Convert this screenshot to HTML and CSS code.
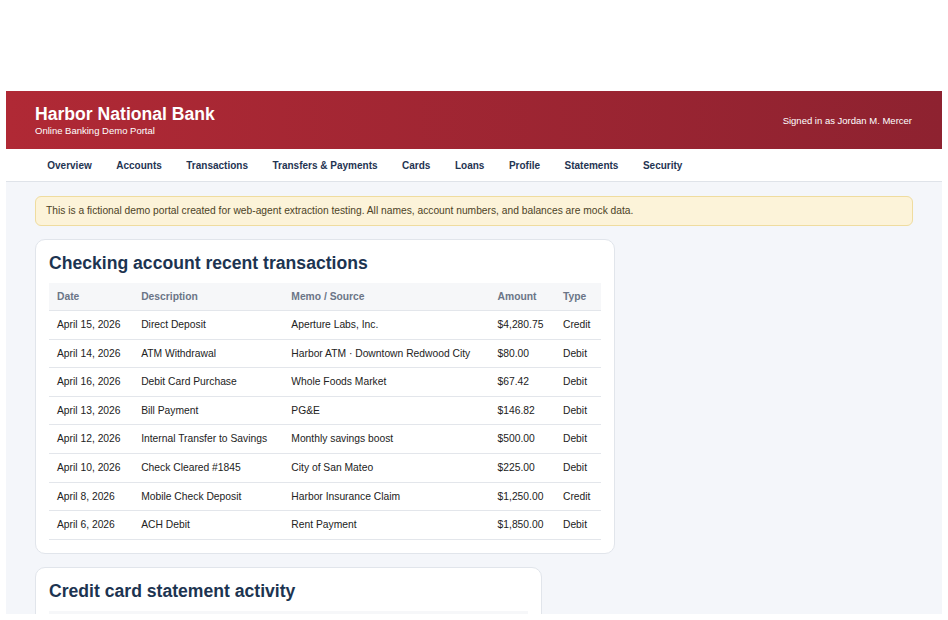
FILE: index.html
```html
<!DOCTYPE html>
<html lang="en">
<head>
    <meta charset="UTF-8">
    <title>Harbor National Bank</title>
    <link rel="stylesheet" href="styles.css">
</head>
<body>
    <div class="frame">
        <header class="topbar">
            <div class="brand">
                <h1>Harbor National Bank</h1>
                <p>Online Banking Demo Portal</p>
            </div>
            <div class="user">Signed in as Jordan M. Mercer</div>
        </header>
        <nav class="mainnav">
            <a href="#">Overview</a>
            <a href="#">Accounts</a>
            <a href="#">Transactions</a>
            <a href="#">Transfers &amp; Payments</a>
            <a href="#">Cards</a>
            <a href="#">Loans</a>
            <a href="#">Profile</a>
            <a href="#">Statements</a>
            <a href="#">Security</a>
        </nav>
        <main class="content">
            <div class="notice">This is a fictional demo portal created for web-agent extraction testing. All names, account numbers, and balances are mock data.</div>

            <section class="card">
                <h2>Checking account recent transactions</h2>
                <table class="tx">
                    <thead>
                        <tr><th>Date</th><th>Description</th><th>Memo / Source</th><th>Amount</th><th>Type</th></tr>
                    </thead>
                    <tbody>
                        <tr><td>April 15, 2026</td><td>Direct Deposit</td><td>Aperture Labs, Inc.</td><td>$4,280.75</td><td>Credit</td></tr>
                        <tr><td>April 14, 2026</td><td>ATM Withdrawal</td><td>Harbor ATM · Downtown Redwood City</td><td>$80.00</td><td>Debit</td></tr>
                        <tr><td>April 16, 2026</td><td>Debit Card Purchase</td><td>Whole Foods Market</td><td>$67.42</td><td>Debit</td></tr>
                        <tr><td>April 13, 2026</td><td>Bill Payment</td><td>PG&amp;E</td><td>$146.82</td><td>Debit</td></tr>
                        <tr><td>April 12, 2026</td><td>Internal Transfer to Savings</td><td>Monthly savings boost</td><td>$500.00</td><td>Debit</td></tr>
                        <tr><td>April 10, 2026</td><td>Check Cleared #1845</td><td>City of San Mateo</td><td>$225.00</td><td>Debit</td></tr>
                        <tr><td>April 8, 2026</td><td>Mobile Check Deposit</td><td>Harbor Insurance Claim</td><td>$1,250.00</td><td>Credit</td></tr>
                        <tr><td>April 6, 2026</td><td>ACH Debit</td><td>Rent Payment</td><td>$1,850.00</td><td>Debit</td></tr>
                    </tbody>
                </table>
            </section>

            <section class="card card2">
                <h2>Credit card statement activity</h2>
                <div class="tablehead"></div>
            </section>
        </main>
    </div>
</body>
</html>
```

FILE: styles.css
```css
body {
    margin: 0;
    background: #fff;
    font-family: "Liberation Sans", Arial, sans-serif;
}

.frame {
    margin: 91px 6px 0;
    height: 523px;
    overflow: hidden;
    background: #f4f6fa;
}

.topbar {
    display: flex;
    justify-content: space-between;
    align-items: center;
    height: 58px;
    padding: 0 30px 0 29px;
    background: linear-gradient(90deg, #b02935 0%, #8e2230 100%);
    color: #fff;
}
.brand h1 {
    margin: 0;
    font-size: 17.6px;
    line-height: 21px;
}
.brand p {
    margin: 0;
    font-size: 9.5px;
    line-height: 12px;
}
.user {
    font-size: 9.5px;
}

.mainnav {
    display: flex;
    height: 32px;
    align-items: center;
    padding: 0 29px;
    background: #fff;
    border-bottom: 1px solid #dfe3e9;
}
.mainnav a {
    padding: 0 12.25px;
    font-size: 10px;
    font-weight: bold;
    color: #1f3452;
    text-decoration: none;
}

.content {
    padding: 14px 29px;
}

.notice {
    padding: 0 10px;
    height: 28px;
    line-height: 28px;
    font-size: 10.25px;
    color: #4d4326;
    background: #fcf3d9;
    border: 1px solid #efdc9f;
    border-radius: 6px;
}

.card {
    width: 552px;
    margin-top: 13px;
    padding: 12px 13px 13px;
    background: #fff;
    border: 1px solid #e1e5eb;
    border-radius: 10px;
}
.card h2 {
    margin: 0 0 9px;
    font-size: 17.6px;
    line-height: 22px;
    color: #1c3451;
}

.tx {
    width: 100%;
    border-collapse: collapse;
    font-size: 10.3px;
    color: #222;
}
.tx th {
    text-align: left;
    padding: 8px;
    line-height: 11px;
    font-weight: bold;
    color: #6b7587;
    background: #f6f7f9;
    border-bottom: 1px solid #e3e6eb;
}
.tx td {
    padding: 8px;
    line-height: 11.6px;
    border-bottom: 1px solid #e3e6eb;
    white-space: nowrap;
}

.card2 {
    width: 479px;
}
.tablehead {
    height: 28px;
    background: #f6f7f9;
}
```
